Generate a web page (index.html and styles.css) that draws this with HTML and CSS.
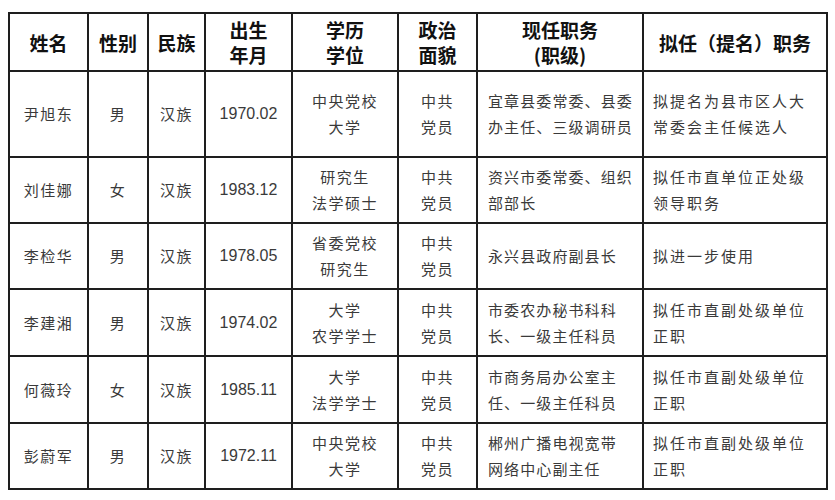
FILE: index.html
```html
<!DOCTYPE html>
<html lang="zh">
<head>
<meta charset="utf-8">
<link rel="stylesheet" href="styles.css">
</head>
<body>
<div class="page">
<table class="roster">
<colgroup>
<col class="c1"><col class="c2"><col class="c3"><col class="c4"><col class="c5"><col class="c6"><col class="c7"><col class="c8">
</colgroup>
<thead>
<tr class="head">
<th>姓名</th><th>性别</th><th>民族</th><th>出生<br>年月</th><th>学历<br>学位</th><th>政治<br>面貌</th><th>现任职务<br>(职级)</th><th>拟任（提名）职务</th>
</tr>
</thead>
<tbody>
<tr class="r1">
<td>尹旭东</td><td>男</td><td>汉族</td><td class="num">1970.02</td><td>中央党校<br>大学</td><td>中共<br>党员</td><td class="left cur">宜章县委常委、县委<br>办主任、三级调研员</td><td class="left new">拟提名为县市区人大<br>常委会主任候选人</td>
</tr>
<tr class="r2">
<td>刘佳娜</td><td>女</td><td>汉族</td><td class="num">1983.12</td><td>研究生<br>法学硕士</td><td>中共<br>党员</td><td class="left cur">资兴市委常委、组织<br>部部长</td><td class="left new">拟任市直单位正处级<br>领导职务</td>
</tr>
<tr class="r3">
<td>李检华</td><td>男</td><td>汉族</td><td class="num">1978.05</td><td>省委党校<br>研究生</td><td>中共<br>党员</td><td class="left cur">永兴县政府副县长</td><td class="left new">拟进一步使用</td>
</tr>
<tr class="r4">
<td>李建湘</td><td>男</td><td>汉族</td><td class="num">1974.02</td><td>大学<br>农学学士</td><td>中共<br>党员</td><td class="left cur">市委农办秘书科科<br>长、一级主任科员</td><td class="left new">拟任市直副处级单位<br>正职</td>
</tr>
<tr class="r5">
<td>何薇玲</td><td>女</td><td>汉族</td><td class="num">1985.11</td><td>大学<br>法学学士</td><td>中共<br>党员</td><td class="left cur">市商务局办公室主<br>任、一级主任科员</td><td class="left new">拟任市直副处级单位<br>正职</td>
</tr>
<tr class="r6">
<td>彭蔚军</td><td>男</td><td>汉族</td><td class="num">1972.11</td><td>中央党校<br>大学</td><td>中共<br>党员</td><td class="left cur">郴州广播电视宽带<br>网络中心副主任</td><td class="left new">拟任市直副处级单位<br>正职</td>
</tr>
</tbody>
</table>
</div>
</body>
</html>
```

FILE: styles.css
```css
html, body {
  margin: 0;
  padding: 0;
  background: #ffffff;
}
.page {
  padding: 12px 0 0 8px;
}
.roster {
  border-collapse: collapse;
  table-layout: fixed;
  width: 818px;
  font-family: "Noto Sans CJK SC", "Noto Sans", sans-serif;
}
.c1 { width: 79px; }
.c2 { width: 60px; }
.c3 { width: 57px; }
.c4 { width: 87px; }
.c5 { width: 106px; }
.c6 { width: 79px; }
.c7 { width: 166px; }
.c8 { width: 184px; }
.roster th, .roster td {
  border: 2px solid #1e1e1e;
  padding: 0;
  text-align: center;
  vertical-align: middle;
}
.roster th {
  font-size: 19px;
  font-weight: 700;
  line-height: 25px;
  color: #111;
}
.roster td {
  font-size: 15px;
  font-weight: 400;
  line-height: 26px;
  color: #3a3a3a;
  letter-spacing: 1.5px;
}
.roster td.num {
  font-family: "Liberation Sans", Arial, sans-serif;
  font-size: 16px;
  letter-spacing: 0;
}
.roster td.left {
  text-align: left;
}
.roster td.cur {
  padding-left: 10px;
  letter-spacing: 1.1px;
}
.roster td.new {
  padding-left: 9px;
  letter-spacing: 2px;
}
.head { height: 58px; }
.r1 { height: 86px; }
.r2 { height: 66px; }
.r3 { height: 66px; }
.r4 { height: 67px; }
.r5 { height: 67px; }
.r6 { height: 66px; }
```
